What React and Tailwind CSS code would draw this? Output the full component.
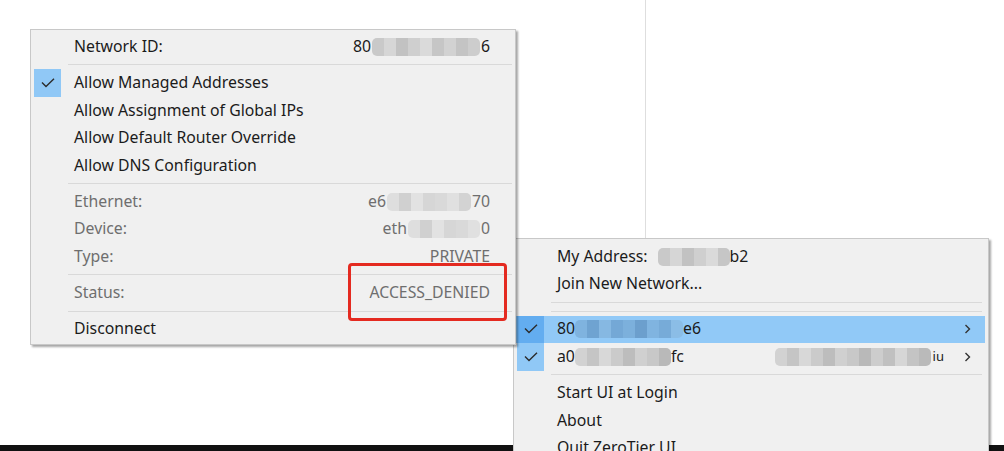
import React from 'react';

const font = { fontFamily: '"Noto Sans", "Open Sans", sans-serif' };

const Check = () => (
    <svg width="14" height="10" viewBox="0 0 14 10" fill="none">
        <path d="M1 4.5 L5 8.5 L13 0.8" stroke="#2b2b2b" strokeWidth="1.4" />
    </svg>
);

const Chevron = () => (
    <svg width="7" height="10" viewBox="0 0 7 10" fill="none">
        <path d="M1.5 1 L5.5 5 L1.5 9" stroke="#333" strokeWidth="1.4" />
    </svg>
);

// pixelated mosaic used where the screenshot hides ids
const Mosaic = ({ cells, className }) => (
    <span className={`inline-flex h-[18px] overflow-hidden rounded-[5px] blur-[0.6px] ${className}`}>
        {cells.map((c, i) => (
            <span key={i} className={`h-full w-[12px] ${c}`} />
        ))}
    </span>
);

const Separator = () => (
    <div className="flex h-[8.75px] items-center pl-[37px] pr-[3px]">
        <div className="h-px w-full bg-[#d9d9d9]" />
    </div>
);

const Row = ({ children, checked, active, dim, right, arrow }) => (
    <div className={`flex h-[27.5px] items-center ${active ? 'bg-[#91c9f7]' : ''}`}>
        <div
            className={`ml-[3px] flex h-full w-[27px] shrink-0 items-center justify-center ${
                checked ? (active ? 'bg-[#63adf0]' : 'bg-[#90c8f6]') : ''
            }`}
        >
            {checked && <Check />}
        </div>
        <div className={`ml-[13px] flex-1 whitespace-nowrap ${dim ? 'text-[#6e6e6e]' : 'text-[#1b1b1b]'}`}>{children}</div>
        {right && <div className={`flex items-center ${dim ? 'text-[#6e6e6e]' : 'text-[#1b1b1b]'}`}>{right}</div>}
        {arrow && (
            <div className="ml-[20px] mr-[14px] flex items-center">
                <Chevron />
            </div>
        )}
    </div>
);

const g1 = ['bg-[#c9c9c9]', 'bg-[#d6d6d6]', 'bg-[#c2c2c2]', 'bg-[#cfcfcf]', 'bg-[#dadada]', 'bg-[#c6c6c6]', 'bg-[#d2d2d2]', 'bg-[#c4c4c4]', 'bg-[#cdcdcd]'];
const g2 = ['bg-[#dedede]', 'bg-[#d0d0d0]', 'bg-[#e2e2e2]', 'bg-[#d6d6d6]', 'bg-[#d9d9d9]', 'bg-[#e0e0e0]', 'bg-[#d3d3d3]', 'bg-[#dbdbdb]'];
const g3 = ['bg-[#d2d2d2]', 'bg-[#c5c5c5]', 'bg-[#d8d8d8]', 'bg-[#cbcbcb]', 'bg-[#bdbdbd]', 'bg-[#d0d0d0]', 'bg-[#c8c8c8]', 'bg-[#b9b9b9]', 'bg-[#cdcdcd]', 'bg-[#c0c0c0]', 'bg-[#d6d6d6]', 'bg-[#c4c4c4]', 'bg-[#bababa]'];
const gb = ['bg-[#7fb3df]', 'bg-[#6fa3d1]', 'bg-[#86b8e2]', 'bg-[#74a8d6]', 'bg-[#7cb0dc]', 'bg-[#6c9fcd]', 'bg-[#80b4e0]', 'bg-[#77abd8]', 'bg-[#8bbde6]'];

const NetworkMenu = () => (
    <div className="absolute left-[30px] top-[29px] z-20 w-[486px] border border-[#c8c8c8] bg-[#f0f0f0] pt-[3px] pb-[1px] text-[15.8px] shadow-[2px_2px_2px_rgba(0,0,0,0.35)]" style={font}>
        <div className="pr-[25px]">
            <Row right={<><span>80</span><Mosaic className="mx-[1px]" cells={g1} /><span>6</span></>}>Network ID:</Row>
        </div>
        <Separator />
        <Row checked>Allow Managed Addresses</Row>
        <Row>Allow Assignment of Global IPs</Row>
        <Row>Allow Default Router Override</Row>
        <Row>Allow DNS Configuration</Row>
        <Separator />
        <div className="pr-[25px]">
            <Row dim right={<><span>e6</span><Mosaic className="mx-[1px]" cells={g2.slice(0, 7)} /><span>70</span></>}>Ethernet:</Row>
            <Row dim right={<><span>eth</span><Mosaic className="mx-[1px]" cells={g2.slice(0, 6)} /><span>0</span></>}>Device:</Row>
            <Row dim right={<span>PRIVATE</span>}>Type:</Row>
        </div>
        <Separator />
        <div className="pr-[25px]">
            <Row dim right={<span>ACCESS_DENIED</span>}>Status:</Row>
        </div>
        <Separator />
        <Row>Disconnect</Row>
    </div>
);

const TrayMenu = () => (
    <div className="absolute left-[513px] top-[238px] z-10 h-[230px] w-[476px] border border-[#c8c8c8] bg-[#f0f0f0] pt-[4px] pr-[3px] text-[15.8px] shadow-[2px_2px_2px_rgba(0,0,0,0.35)]" style={font}>
        <Row>
            <span className="flex items-center">
                <span>My Address:</span>
                <Mosaic className="ml-[10px]" cells={g1.slice(0, 6)} />
                <span>b2</span>
            </span>
        </Row>
        <Row>Join New Network...</Row>
        <Separator />
        <Separator />
        <Row checked active arrow>
            <span className="flex items-center">
                <span>80</span>
                <Mosaic cells={gb} />
                <span>e6</span>
            </span>
        </Row>
        <Row
            checked
            arrow
            right={<><Mosaic cells={g3} /><span className="ml-[2px] text-[13px]">iu</span></>}
        >
            <span className="flex items-center">
                <span>a0</span>
                <Mosaic cells={g3.slice(0, 8)} />
                <span>fc</span>
            </span>
        </Row>
        <Separator />
        <Row>Start UI at Login</Row>
        <Row>About</Row>
        <Row>Quit ZeroTier UI</Row>
    </div>
);

export default function App() {
    return (
        <div className="relative h-[451px] w-[1004px] overflow-hidden bg-white">
            {/* window edge behind the menus */}
            <div className="absolute left-[645px] top-0 h-[239px] w-px bg-[#dedede]" />
            {/* taskbar strip */}
            <div className="absolute bottom-0 left-0 h-[6px] w-full bg-[#111]" />

            <TrayMenu />
            <NetworkMenu />

            {/* annotation */}
            <div className="absolute left-[348px] top-[263px] z-30 h-[58px] w-[159px] rounded-[4px] border-[3px] border-[#e42a20]" />
        </div>
    );
}
